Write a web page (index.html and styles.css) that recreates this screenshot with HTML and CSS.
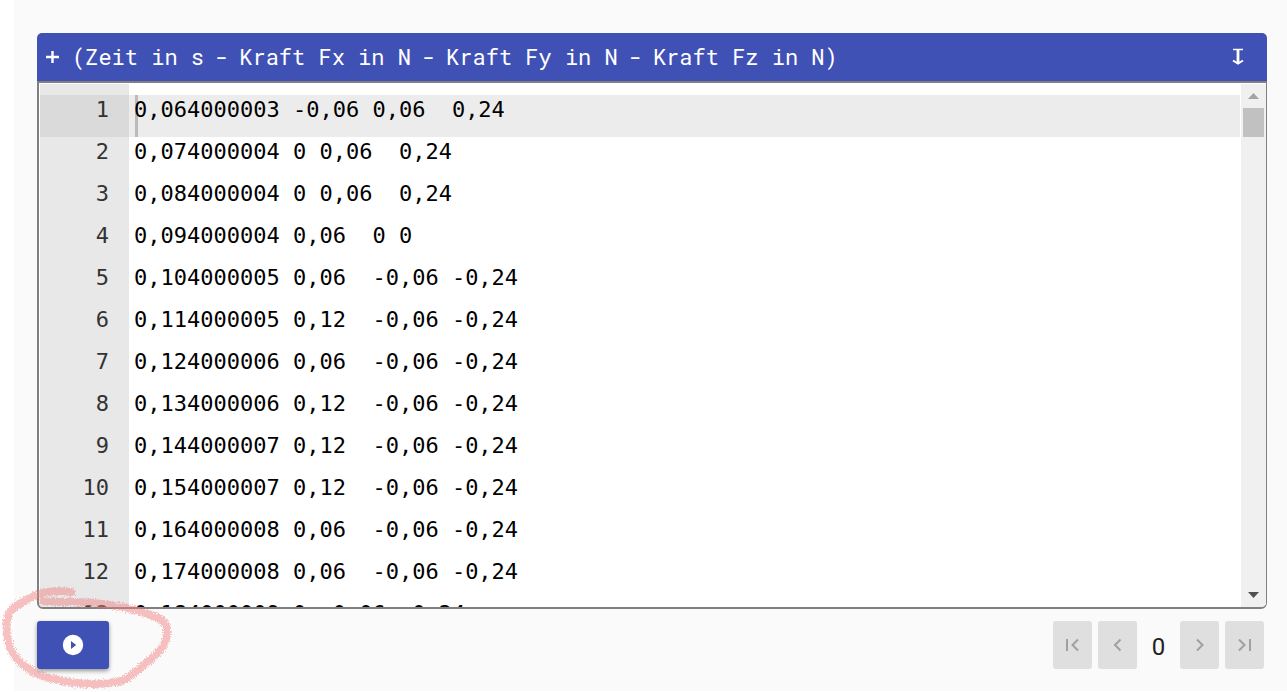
FILE: index.html
```html
<!DOCTYPE html>
<html lang="de">
<head>
<meta charset="utf-8">
<meta name="viewport" content="width=device-width, initial-scale=1">
<title>Messdaten</title>
<link rel="stylesheet" href="styles.css">
</head>
<body>
<main class="page">
  <section class="panel">
    <header class="panel-header">
      <button class="header-button" type="button" aria-label="Hinzufügen"><svg width="14" height="14" viewBox="0 0 14 14"><path d="M7.500 1v12M1 7h13" fill="none" stroke="currentColor" stroke-width="2.4"/></svg></button>
      <h1 class="columns"><span>(Zeit in s</span><span>-</span><span>Kraft Fx in N</span><span>-</span><span>Kraft Fy in N</span><span>-</span><span>Kraft Fz in N)</span></h1>
      <button class="header-button" type="button" aria-label="Herunterladen"><svg width="12" height="18" viewBox="0 0 12 18"><path d="M1 1.500h10" fill="none" stroke="currentColor" stroke-width="1.500"/><path d="M6 1v14" fill="none" stroke="currentColor" stroke-width="2.800"/><path d="M1 12.500L6 15.500L11 12.500" fill="none" stroke="currentColor" stroke-width="2"/></svg></button>
    </header>
    <div class="editor">
      <div class="lines">
        <div class="line active"><span class="number">1</span><code class="code">0,064000003 -0,06 0,06  0,24</code></div>
        <div class="line"><span class="number">2</span><code class="code">0,074000004 0 0,06  0,24</code></div>
        <div class="line"><span class="number">3</span><code class="code">0,084000004 0 0,06  0,24</code></div>
        <div class="line"><span class="number">4</span><code class="code">0,094000004 0,06  0 0</code></div>
        <div class="line"><span class="number">5</span><code class="code">0,104000005 0,06  -0,06 -0,24</code></div>
        <div class="line"><span class="number">6</span><code class="code">0,114000005 0,12  -0,06 -0,24</code></div>
        <div class="line"><span class="number">7</span><code class="code">0,124000006 0,06  -0,06 -0,24</code></div>
        <div class="line"><span class="number">8</span><code class="code">0,134000006 0,12  -0,06 -0,24</code></div>
        <div class="line"><span class="number">9</span><code class="code">0,144000007 0,12  -0,06 -0,24</code></div>
        <div class="line"><span class="number">10</span><code class="code">0,154000007 0,12  -0,06 -0,24</code></div>
        <div class="line"><span class="number">11</span><code class="code">0,164000008 0,06  -0,06 -0,24</code></div>
        <div class="line"><span class="number">12</span><code class="code">0,174000008 0,06  -0,06 -0,24</code></div>
        <div class="line"><span class="number">13</span><code class="code">0,184000009 0  0,06  0,24</code></div>
      </div>
      <div class="scrollbar" aria-hidden="true">
        <svg class="arrow up" width="11" height="6" viewBox="0 0 11 6"><path d="M0 6L5.500 0L11 6z"/></svg>
        <div class="thumb"></div>
        <svg class="arrow down" width="11" height="6" viewBox="0 0 11 6"><path d="M0 0L5.500 6L11 0z"/></svg>
      </div>
    </div>
  </section>
  <footer class="controls">
    <button class="run" type="button" aria-label="Ausführen"><svg width="24" height="24" viewBox="0 0 24 24"><path fill-rule="evenodd" d="M12 1.800a10.200 10.200 0 1 0 0 20.400a10.200 10.200 0 0 0 0-20.400zM10 8v8l5.200-4z"/></svg></button>
    <nav class="pager" aria-label="Seiten">
      <button class="step" type="button" disabled aria-label="Erste Seite"><svg width="24" height="24" viewBox="0 0 24 24"><path d="M6 6v12M17 6.500L11.500 12l5.500 5.500"/></svg></button>
      <button class="step" type="button" disabled aria-label="Vorherige Seite"><svg width="24" height="24" viewBox="0 0 24 24"><path d="M14.500 6.500L9 12l5.500 5.500"/></svg></button>
      <span class="page-number">0</span>
      <button class="step" type="button" disabled aria-label="Nächste Seite"><svg width="24" height="24" viewBox="0 0 24 24"><path d="M9 6.500L14.500 12l-5.500 5.500"/></svg></button>
      <button class="step" type="button" disabled aria-label="Letzte Seite"><svg width="24" height="24" viewBox="0 0 24 24"><path d="M6 6.500L11.500 12l-5.500 5.500M17 6v12"/></svg></button>
    </nav>
    <svg class="marker" width="180" height="112" viewBox="0 580 180 112" aria-hidden="true">
      <filter id="chalk" x="-5%" y="-5%" width="110%" height="110%">
        <feTurbulence type="fractalNoise" baseFrequency="0.9" numOctaves="2" seed="4" result="noise"/>
        <feDisplacementMap in="SourceGraphic" in2="noise" scale="6" xChannelSelector="R" yChannelSelector="G"/>
        <feGaussianBlur stdDeviation="0.6"/>
      </filter>
      <path filter="url(#chalk)" d="M71 592C58 590 43 591 30 598C17 605 8 609 7 620C5 638 10 656 26 667C36 676 50 678 62 681C80 684 106 686 123 680C136 674 140 667 150 660C159 652 166 645 167 634C168 621 160 618 150 615C135 609 114 605 93 603C73 601 57 603 43 601"/>
    </svg>
  </footer>
</main>
</body>
</html>
```
FILE: styles.css
```css
* { box-sizing: border-box; }

body {
  margin: 0;
  background: #fff;
  font-family: Roboto, sans-serif;
}

.page {
  display: flex;
  flex-direction: column;
  gap: 12px;
  height: calc(100vh - 1px);
  margin-left: 14px;
  padding: 33px 20px 22px 23px;
  background: #fafafa;
}

.panel {
  display: flex;
  flex: 1;
  flex-direction: column;
  min-height: 0;
}

.panel-header {
  display: flex;
  align-items: center;
  gap: 13px;
  height: 48px;
  padding: 0 23px 0 8px;
  border-radius: 5px 5px 0 0;
  background: #3f51b5;
  color: #fff;
}

.header-button {
  display: flex;
  padding: 0;
  border: 0;
  background: none;
  color: inherit;
}

.columns {
  display: flex;
  flex: 1;
  gap: 11px;
  margin: 0;
  font: 400 22px/30px "Roboto Mono", "Liberation Mono", monospace;
  white-space: nowrap;
}

.editor {
  display: flex;
  flex: 1;
  min-height: 0;
  overflow: hidden;
  border: 2px solid #808080;
  border-right-width: 1px;
  border-radius: 0 0 6px 6px;
  background: #fff;
}

.lines {
  flex: 1;
  min-width: 0;
  margin: 1px 1px 0;
  padding-top: 11px;
  overflow: hidden;
  background: linear-gradient(to right, #e8e8e8 89px, #fff 89px);
}

.line {
  display: flex;
  height: 42px;
  font: 22px/30px "DejaVu Sans Mono", monospace;
}

.number {
  width: 89px;
  padding-right: 20px;
  color: #333;
  text-align: right;
}

.code {
  flex: 1;
  margin-left: 5px;
  font: inherit;
  color: #000;
  white-space: pre;
}

.active { background: #ececec; }
.active .number { background: #dadada; }
.active .code { background: linear-gradient(to right, transparent 1px, #bbb 1px, #bbb 4px, transparent 4px); }

.scrollbar {
  display: flex;
  flex-direction: column;
  align-items: center;
  width: 25px;
  margin-top: 1px;
  padding: 9px 0;
  background: #f0f0f0;
}

.arrow.up { fill: #a3a3a3; }
.arrow.down { margin-top: auto; fill: #505050; }

.thumb {
  width: 21px;
  height: 29px;
  margin-top: 9px;
  background: #c1c1c1;
}

.controls {
  position: relative;
  display: flex;
  justify-content: space-between;
  height: 48px;
  padding-right: 3px;
}

.run,
.step {
  display: flex;
  align-items: center;
  justify-content: center;
  padding: 0;
  border: 0;
  border-radius: 3px;
}

.run {
  width: 72px;
  background: #3f51b5;
  fill: #fff;
  box-shadow: 0 2px 4px rgba(0, 0, 0, .4);
}

.pager {
  display: flex;
  gap: 6px;
}

.step {
  width: 39px;
  background: #dfdfdf;
}

.step path {
  fill: none;
  stroke: #a0a0a0;
  stroke-width: 2;
}

.page-number {
  width: 31px;
  color: #212121;
  font-size: 24px;
  line-height: 52px;
  text-align: center;
}

.marker {
  position: absolute;
  left: -37px;
  bottom: -23px;
  pointer-events: none;
}

.marker path {
  fill: none;
  stroke: #f08080;
  stroke-width: 8;
  stroke-linecap: round;
  opacity: .48;
}
```
